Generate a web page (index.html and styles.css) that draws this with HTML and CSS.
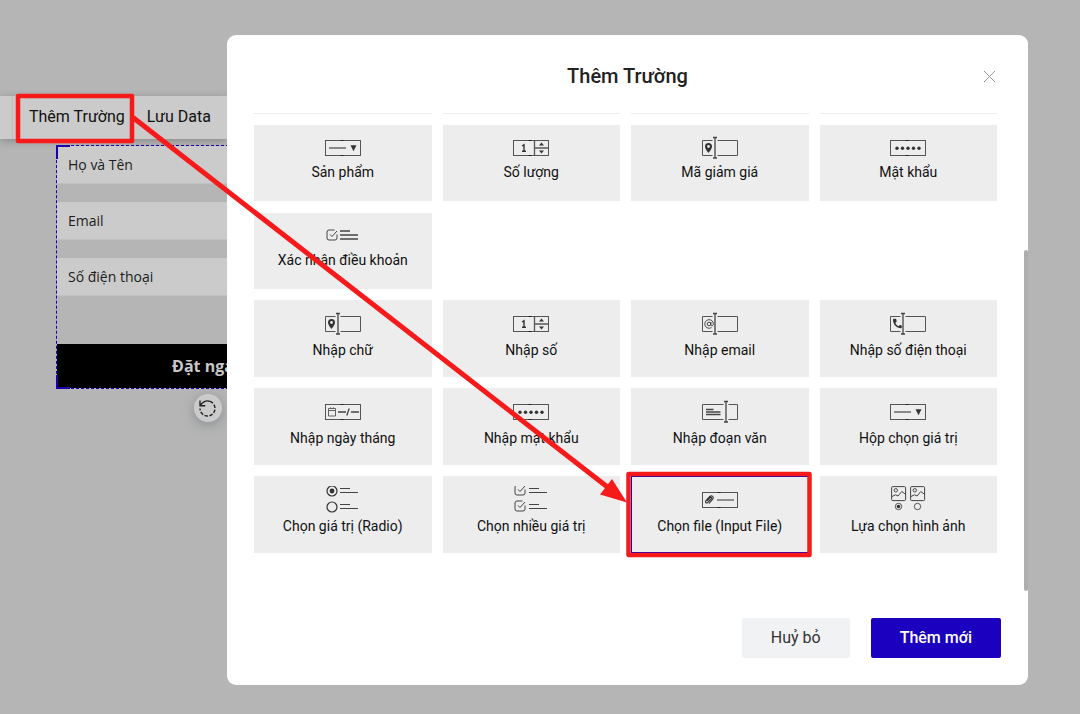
FILE: index.html
```html
<!DOCTYPE html>
<html lang="vi">
<head>
<meta charset="utf-8">
<meta name="viewport" content="width=device-width, initial-scale=1">
<title>Thêm Trường</title>
<link rel="stylesheet" href="styles.css">
</head>
<body>
<svg class="sprite" aria-hidden="true">
  <symbol id="i-cursorbox" viewBox="0 0 36 28">
    <path d="M10.500 6.500H.5v15h10M15.500 6.500h20v15h-20" fill="none" stroke="#555"/>
    <path d="M11 3.500h4M11 24h4M13 3.500V24" fill="none" stroke="#444" stroke-width="1.300"/>
  </symbol>
  <symbol id="i-text" viewBox="0 0 36 28">
    <use href="#i-cursorbox"/>
    <path fill="#333" fill-rule="evenodd" d="M6.500 9a3.500 3.500 0 0 0-3.500 3.500c0 2.500 3.500 6.500 3.500 6.500s3.500-4 3.500-6.500a3.500 3.500 0 0 0-3.500-3.500zm0 2.100a1.400 1.400 0 1 1 0 2.800 1.400 1.400 0 0 1 0-2.800z"/>
  </symbol>
  <symbol id="i-email" viewBox="0 0 36 28">
    <use href="#i-cursorbox"/>
    <circle cx="7" cy="14" r="1.800" fill="none" stroke="#333" stroke-width=".9"/>
    <path d="M8.900 12v2.600c0 1.900 2.500 1.500 2.500-.7a4.300 4.300 0 1 0-2 3.700" fill="none" stroke="#333" stroke-width=".9"/>
  </symbol>
  <symbol id="i-phone" viewBox="0 0 36 28">
    <use href="#i-cursorbox"/>
    <path fill="#333" d="M3 9.600c0-.5.300-.8.800-.8h1.700c.4 0 .7.300.8.700l.3 1.800c0 .3 0 .6-.3.800l-1 .9c.8 1.600 1.800 2.600 3.300 3.300l.9-1c.2-.2.500-.3.800-.3l.8.300c.4.100.7.400.7.800v1.300c0 .5-.4.800-.8.800C6.500 18.200 3 14.500 3 9.600z"/>
  </symbol>
  <symbol id="i-box" viewBox="0 0 36 28">
    <rect x=".5" y="6.500" width="35" height="15" fill="none" stroke="#555"/>
    <path d="M15.500 6.500h3M15.500 21.500h3" stroke="#222"/>
  </symbol>
  <symbol id="i-select" viewBox="0 0 36 28">
    <use href="#i-box"/>
    <path d="M4 14h17" stroke="#888" stroke-width="2"/>
    <path d="M25.500 11.300h6l-3 6z" fill="#333"/>
  </symbol>
  <symbol id="i-number" viewBox="0 0 36 28">
    <use href="#i-box"/>
    <path d="M21.500 6.500v15M22 14h13.500" fill="none" stroke="#555" stroke-width="1.300"/>
    <path d="M9 12l2-1.200v6.500M9 17.300h4" fill="none" stroke="#333" stroke-width="1.400"/>
    <path d="M26 11.500h5l-2.500-3zM26 16.500h5l-2.500 3z" fill="#333"/>
  </symbol>
  <symbol id="i-password" viewBox="0 0 36 28">
    <use href="#i-box"/>
    <g fill="#333"><circle cx="7" cy="14.300" r="1.700"/><circle cx="12.500" cy="14.300" r="1.700"/><circle cx="18" cy="14.300" r="1.700"/><circle cx="23.500" cy="14.300" r="1.700"/><circle cx="29" cy="14.300" r="1.700"/></g>
  </symbol>
  <symbol id="i-date" viewBox="0 0 36 28">
    <use href="#i-box"/>
    <path d="M3.500 10.500h7v7.500h-7zM3.500 12.500h7M5.500 9.300v1.200M8.500 9.300v1.200" fill="none" stroke="#555" stroke-width=".9"/>
    <path d="M13 14h8M26 14h8M21.800 17.500l2.400-7" fill="none" stroke="#444" stroke-width="1.300"/>
  </symbol>
  <symbol id="i-textarea" viewBox="0 0 36 28">
    <path d="M21.500 6.500H.5v15h21M26.500 6.500h9v15h-9" fill="none" stroke="#555"/>
    <path d="M22 3.500h4M22 24h4M24 3.500V24" fill="none" stroke="#444" stroke-width="1.300"/>
    <path d="M4 11.500h7.500M4 14h14.500M4 16.500h14.500" stroke="#444" stroke-width="1.300"/>
  </symbol>
  <symbol id="i-file" viewBox="0 0 36 28">
    <use href="#i-box"/>
    <path d="M15 14h17" stroke="#777" stroke-width="1.600"/>
    <path d="M5 14.800l3.200-3.300c.9-.8 2 .2 1.200 1.100l-3.700 3.900c-1.500 1.300-3-.3-1.800-1.800l3.900-4.200c2-1.800 4.600.5 2.900 2.600L7 17.500" fill="none" stroke="#333" stroke-width="1.100"/>
  </symbol>
  <symbol id="i-tick" viewBox="0 0 12 12">
    <path d="M8.500 1H3a2 2 0 0 0-2 2v6a2 2 0 0 0 2 2h6a2 2 0 0 0 2-2V5.500M4 5.500l2 2L11 2" fill="none" stroke="#444"/>
  </symbol>
  <symbol id="i-terms" viewBox="0 0 36 28">
    <use href="#i-tick" x="1" y="7" width="12" height="12"/>
    <path d="M15 9h10M15 13h18M15 17h18" stroke="#444" stroke-width="1.300"/>
  </symbol>
  <symbol id="i-radio" viewBox="0 0 36 28">
    <g fill="none" stroke="#333" stroke-width="1.200"><circle cx="7" cy="5" r="5"/><circle cx="7" cy="21" r="5"/></g>
    <circle cx="7" cy="5" r="2.400" fill="#333"/>
    <path d="M15 2.500h10M15 6.500h18M15 18.500h10M15 22.500h18" stroke="#444" stroke-width="1.200"/>
  </symbol>
  <symbol id="i-checks" viewBox="0 0 36 28">
    <use href="#i-tick" x="1" y="-2" width="12" height="12"/>
    <use href="#i-tick" x="1" y="14" width="12" height="12"/>
    <path d="M16 2.500h10M16 6.500h18M16 18.500h10M16 22.500h18" stroke="#444" stroke-width="1.200"/>
  </symbol>
  <symbol id="i-photo" viewBox="0 0 16 16">
    <rect x=".6" y=".6" width="14" height="14" rx="1.200" fill="none" stroke="#444"/>
    <circle cx="4.800" cy="4.300" r="1.700" fill="none" stroke="#444"/>
    <path d="M1 10.500l3.500-1.700L7 10l3.800-4.500 4 3" fill="none" stroke="#444"/>
  </symbol>
  <symbol id="i-images" viewBox="0 0 36 28">
    <use href="#i-photo" x="1" y="0" width="16" height="16"/>
    <use href="#i-photo" x="20" y="0" width="16" height="16"/>
    <g fill="none" stroke="#444" stroke-width=".9"><circle cx="8.500" cy="20.500" r="3.200"/><circle cx="27.500" cy="20.500" r="3.200"/></g>
    <circle cx="8.500" cy="20.500" r="1.800" fill="#333"/>
  </symbol>
</svg>

<div class="editor">
  <nav class="toolbar">
    <button class="tool" type="button">Thêm Trường</button>
    <button class="tool" type="button">Lưu Data</button>
  </nav>
  <form class="form-block">
    <input class="form-input" type="text" placeholder="Họ và Tên" aria-label="Họ và Tên">
    <input class="form-input" type="email" placeholder="Email" aria-label="Email">
    <input class="form-input" type="tel" placeholder="Số điện thoại" aria-label="Số điện thoại">
    <button class="form-submit" type="button">Đặt ngay</button>
    <span class="corner corner-top"></span>
    <span class="corner corner-bottom"></span>
    <button class="rotate" type="button" aria-label="Xoay">
      <svg width="19" height="19" viewBox="0 0 19 19"><g fill="none" stroke="#222" stroke-width="1.400"><path d="M2 1.500v5.300h5.300M2.500 6.500A7.500 7.500 0 0 1 12 2.400"/><path d="M12 2.400A7.500 7.500 0 0 1 17 9.500 7.500 7.500 0 0 1 2 9.500" stroke-dasharray="3.500 1.600"/></g></svg>
    </button>
  </form>
</div>

<div class="overlay">
  <section class="modal" role="dialog" aria-labelledby="modal-title">
    <header class="modal-header">
      <h2 class="modal-title" id="modal-title">Thêm Trường</h2>
      <button class="close" type="button" aria-label="Đóng"><svg width="13" height="13" viewBox="0 0 13 13"><path d="M1 1l11 11M12 1L1 12" stroke="#999"/></svg></button>
    </header>
    <div class="modal-body">
      <div class="peek"><i></i><i></i><i></i><i></i></div>
      <div class="fields fields-product">
        <button class="card" type="button"><svg class="icon"><use href="#i-select"/></svg>Sản phẩm</button>
        <button class="card" type="button"><svg class="icon"><use href="#i-number"/></svg>Số lượng</button>
        <button class="card" type="button"><svg class="icon"><use href="#i-text"/></svg>Mã giảm giá</button>
        <button class="card" type="button"><svg class="icon"><use href="#i-password"/></svg>Mật khẩu</button>
        <button class="card" type="button"><svg class="icon"><use href="#i-terms"/></svg>Xác nhận điều khoản</button>
      </div>
      <div class="fields fields-input">
        <button class="card" type="button"><svg class="icon"><use href="#i-text"/></svg>Nhập chữ</button>
        <button class="card" type="button"><svg class="icon"><use href="#i-number"/></svg>Nhập số</button>
        <button class="card" type="button"><svg class="icon"><use href="#i-email"/></svg>Nhập email</button>
        <button class="card" type="button"><svg class="icon"><use href="#i-phone"/></svg>Nhập số điện thoại</button>
        <button class="card" type="button"><svg class="icon"><use href="#i-date"/></svg>Nhập ngày tháng</button>
        <button class="card" type="button"><svg class="icon"><use href="#i-password"/></svg>Nhập mật khẩu</button>
        <button class="card" type="button"><svg class="icon"><use href="#i-textarea"/></svg>Nhập đoạn văn</button>
        <button class="card" type="button"><svg class="icon"><use href="#i-select"/></svg>Hộp chọn giá trị</button>
        <button class="card" type="button"><svg class="icon"><use href="#i-radio"/></svg>Chọn giá trị (Radio)</button>
        <button class="card" type="button"><svg class="icon"><use href="#i-checks"/></svg>Chọn nhiều giá trị</button>
        <button class="card selected" type="button"><svg class="icon"><use href="#i-file"/></svg>Chọn file (Input File)</button>
        <button class="card" type="button"><svg class="icon"><use href="#i-images"/></svg>Lựa chọn hình ảnh</button>
      </div>
      <span class="thumb"></span>
    </div>
    <footer class="modal-footer">
      <button class="btn" type="button">Huỷ bỏ</button>
      <button class="btn primary" type="button">Thêm mới</button>
    </footer>
  </section>
</div>

<svg class="annotation" width="1080" height="714" viewBox="0 0 1080 714" aria-hidden="true">
  <g fill="none" stroke="#f61a1a" stroke-linejoin="round">
    <rect x="18" y="96" width="114" height="45" stroke-width="4.500"/>
    <rect x="628.500" y="474" width="181" height="81" stroke-width="4.500"/>
    <path d="M133 117.500L610 489" stroke-width="5"/>
  </g>
  <path d="M627 502.500L612 479l-12 15.500z" fill="#f61a1a"/>
</svg>
</body>
</html>
```
FILE: styles.css
```css
* {
  box-sizing: border-box;
}

body {
  position: relative;
  min-height: 100vh;
  margin: 0;
  overflow: hidden;
  background: #b5b5b5;
  color: #111;
  font-family: Roboto, "Liberation Sans", sans-serif;
}

button {
  margin: 0;
  border: 0;
  color: inherit;
  font: inherit;
}

.sprite {
  position: absolute;
  width: 0;
  height: 0;
}

/* Page editor behind the dialog */
.editor {
  padding-top: 96px;
}

.toolbar {
  display: flex;
  width: 227px;
  height: 43px;
  padding-left: 12px;
  background: #cbcbcb;
  box-shadow: 0 2px 8px rgba(0, 0, 0, 0.25);
}

.tool {
  padding: 0 0 2px 16px;
  border-left: 1px solid #bfbfbf;
  background: none;
  font-size: 16px;
  white-space: nowrap;
}

.tool + .tool {
  padding-left: 22px;
  border-left: 0;
}

.form-block {
  position: relative;
  display: flex;
  flex-direction: column;
  gap: 18px;
  width: 303px;
  margin: 6px 0 0 56px;
  border: 1px dashed #1b00a8;
}

.form-input {
  height: 38px;
  padding: 0 11px 1px;
  border: 0;
  border-bottom: 1px solid #c0c0c0;
  background: #cbcbcb;
  font: 14px "Open Sans", sans-serif;
}

.form-input::placeholder {
  color: #1c1c1c;
  opacity: 1;
}

.form-submit {
  height: 44px;
  margin-top: 30px;
  background: #000;
  color: #c8c8c8;
  font: bold 16px "Open Sans", sans-serif;
}

.corner {
  position: absolute;
  left: -1px;
  width: 14px;
  height: 14px;
  border-left: 2px solid #1b00a8;
}

.corner-top {
  top: -1px;
  border-top: 2px solid #1b00a8;
}

.corner-bottom {
  bottom: -1px;
  border-bottom: 2px solid #1b00a8;
}

.rotate {
  position: absolute;
  top: calc(100% + 6px);
  left: calc(50% - 14px);
  display: grid;
  place-items: center;
  width: 28px;
  height: 28px;
  padding: 0;
  border-radius: 50%;
  background: #cbcbcb;
  box-shadow: 0 3px 12px rgba(60, 70, 80, 0.35);
}

/* Dialog */
.overlay {
  position: absolute;
  inset: 0;
  display: flex;
  padding: 35px 52px 29px 227px;
}

.modal {
  display: flex;
  flex: 1;
  flex-direction: column;
  border-radius: 9px;
  background: #fff;
}

.modal-header {
  position: relative;
  height: 78px;
  padding-top: 29px;
  text-align: center;
}

.modal-title {
  margin: 0;
  color: #222;
  font-size: 20px;
  font-weight: 500;
  line-height: 24px;
}

.close {
  position: absolute;
  top: 31px;
  right: 29px;
  display: grid;
  place-items: center;
  width: 20px;
  height: 20px;
  padding: 0;
  background: none;
}

.modal-body {
  position: relative;
  flex: 1;
  padding: 0 31px 0 27px;
}

.peek,
.fields {
  display: grid;
  grid-template-columns: repeat(4, 1fr);
  column-gap: 11px;
}

.peek i {
  height: 1px;
  background: #ededed;
}

.fields-product {
  grid-auto-rows: 76px;
  row-gap: 12px;
  margin-top: 11px;
}

.fields-input {
  grid-auto-rows: 77px;
  row-gap: 11px;
  margin-top: 11px;
}

.card {
  display: flex;
  flex-direction: column;
  align-items: center;
  padding: 9px 0 0;
  background: #ededed;
  font-size: 14px;
  line-height: 20px;
}

.fields-input .card {
  gap: 2px;
  padding-top: 10px;
}

.card.selected {
  outline: 1px solid #1b00c0;
  outline-offset: -1px;
}

.icon {
  width: 36px;
  height: 28px;
  overflow: visible;
}

.thumb {
  position: absolute;
  top: 137px;
  right: 0;
  bottom: 0;
  width: 4px;
  border-radius: 2px;
  background: #aeaeae;
}

.modal-footer {
  display: flex;
  justify-content: flex-end;
  gap: 21px;
  padding: 27px 27px 27px 0;
}

.btn {
  min-width: 106px;
  height: 40px;
  padding: 0 29px 2px;
  border-radius: 2px;
  background: #f1f2f4;
  color: #333;
  font-size: 16px;
}

.btn.primary {
  min-width: 130px;
  background: #1b00c0;
  color: #fff;
  font-weight: 500;
}

/* Highlight drawn over the whole page */
.annotation {
  position: absolute;
  top: 0;
  left: 0;
  pointer-events: none;
}
```
